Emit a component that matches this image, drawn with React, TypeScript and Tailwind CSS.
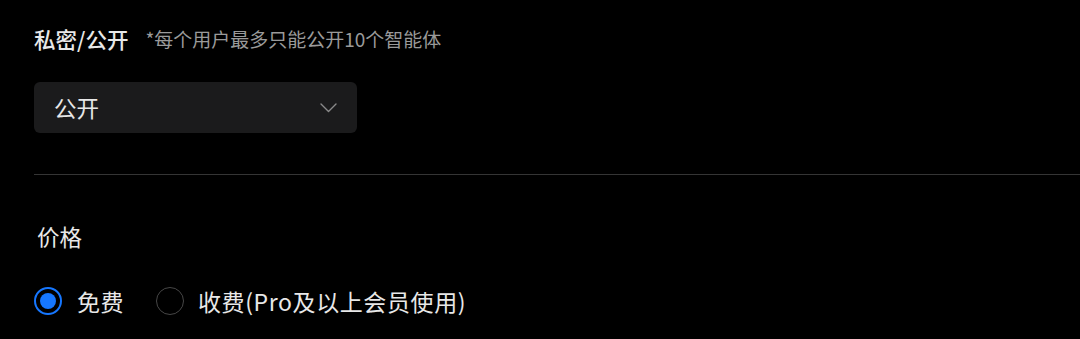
import React from "react";

export default function App() {
  const font = { fontFamily: '"Noto Sans CJK SC", "Noto Sans", sans-serif' };
  return (
    <div className="w-[1080px] h-[339px] bg-black overflow-hidden" style={font}>
      <div className="pl-[34px] pt-[24px]">
        <div className="flex items-center h-[30px]">
          <span className="text-[21.5px] leading-[30px] text-[#e8e8e8] font-medium">私密/公开</span>
          <span className="ml-[17px] text-[19px] leading-[30px] text-[#9a9a9a]">*每个用户最多只能公开10个智能体</span>
        </div>
        <div className="mt-[28px] w-[323px] h-[51px] bg-[#1b1b1c] rounded-[6px] flex items-center justify-between pl-[20px] pr-[20px]">
          <span className="text-[22.5px] text-[#e8e8e8]">公开</span>
          <svg width="17" height="10" viewBox="0 0 17 10" fill="none">
            <path d="M1 1 L8.5 8.5 L16 1" stroke="#8a8a8a" strokeWidth="1.4" strokeLinecap="round" strokeLinejoin="round" />
          </svg>
        </div>
      </div>
      <div className="mt-[41px] ml-[34px] h-px bg-[#353535]" />
      <div className="pl-[34px]">
        <div className="mt-[46px] h-[30px] flex items-center">
          <span className="text-[22.5px] leading-[30px] text-[#e8e8e8] pl-[3px]">价格</span>
        </div>
        <div className="mt-[35px] h-[30px] flex items-center">
          <div className="w-[28px] h-[28px] rounded-full border-2 border-[#1677ff] flex items-center justify-center">
            <div className="w-[16px] h-[16px] rounded-full bg-[#1677ff]" />
          </div>
          <span className="ml-[15px] text-[23px] tracking-[0.5px] text-[#e8e8e8]">免费</span>
          <div className="ml-[32px] w-[28px] h-[28px] rounded-full border-[1.5px] border-[#474747]" />
          <span className="ml-[14px] text-[23px] tracking-[0.6px] text-[#e8e8e8]">收费(Pro及以上会员使用)</span>
        </div>
      </div>
    </div>
  );
}
